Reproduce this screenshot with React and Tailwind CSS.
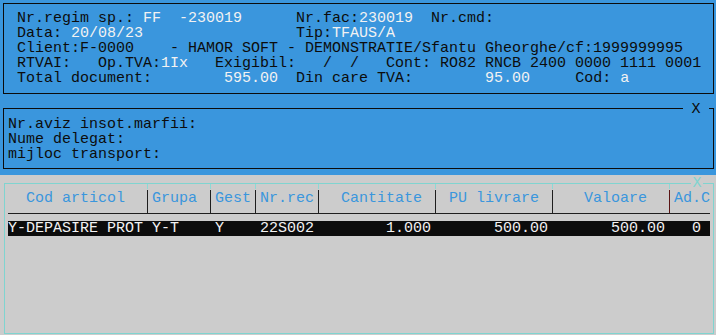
import React from "react";

const W = ({ children }) => <span className="text-[#f2f2f2]">{children}</span>;

const Sep = ({ red }) => (
  <div className="w-[9px] flex flex-col items-center">
    <div className="w-px h-[5px] bg-[#8fd8d4]" />
    <div className={"w-px flex-1 mt-[1px] " + (red ? "bg-[#5a1414]" : "bg-[#1e1e1e]")} />
  </div>
);

const Cell = ({ w, children }) => (
  <div className={"pt-[7px] text-[#3a96dd] whitespace-pre " + w}>{children}</div>
);

export default function App() {
  return (
    <div className="w-[716px] h-[335px] overflow-hidden bg-[#cccccc] font-['Liberation_Mono',monospace] text-[15px] leading-[15px]">
      <div className="bg-[#3a96dd] h-[175px] pt-[3px] pl-[3px]">
        <div className="border border-[#0c0c0c] w-[711px] h-[91px] pl-[13px] pt-[7px] whitespace-pre text-[#0c0c0c]">
          <div>Nr.regim sp.: <W>FF  -230019</W>      Nr.fac:<W>230019</W>  Nr.cmd:</div>
          <div>Data: <W>20/08/23</W>                 Tip:<W>TFAUS/A</W></div>
          <div>Client:F-0000    - HAMOR SOFT - DEMONSTRATIE/Sfantu Gheorghe/cf:1999999995</div>
          <div>RTVAI:   Op.TVA:<W>1Ix</W>   Exigibil:   /  /   Cont: RO82 RNCB 2400 0000 1111 0001</div>
          <div>Total document:        <W>595.00</W>  Din care TVA:        <W>95.00</W>     Cod: <W>a</W></div>
        </div>
        <div className="relative mt-[14px] border border-[#0c0c0c] w-[711px] h-[61px] pl-[4px] pt-[8px] whitespace-pre text-[#0c0c0c]">
          <div>Nr.aviz insot.marfii:</div>
          <div>Nume delegat:</div>
          <div>mijloc transport:</div>
          <span className="absolute top-[-7px] left-[679px] w-[26px] h-[15px] bg-[#3a96dd] text-center">X</span>
        </div>
      </div>
      <div className="pt-[8px] pl-[4px]">
        <div className="relative border border-[#7fd4d0] w-[710px] h-[151px] pl-[3px]">
          <span className="absolute top-[-8px] left-[686px] w-[12px] h-[15px] bg-[#cccccc] text-center text-[#7fd4d0]">X</span>
          <div className="w-[702px] h-[30px] flex border-b border-[#1e1e1e]">
            <Cell w="w-[135px]">  Cod articol</Cell>
            <Sep />
            <Cell w="w-[54px]">Grupa</Cell>
            <Sep />
            <Cell w="w-[36px]">Gest</Cell>
            <Sep />
            <Cell w="w-[54px]">Nr.rec</Cell>
            <Sep />
            <Cell w="w-[108px]">  Cantitate</Cell>
            <Sep />
            <Cell w="w-[108px]"> PU livrare</Cell>
            <Sep />
            <Cell w="w-[108px]">   Valoare</Cell>
            <Sep red />
            <Cell w="w-[36px]">Ad.C</Cell>
          </div>
          <div className="mt-[7px] w-[702px] h-[15px] leading-[16px] bg-[#0c0c0c] text-[#f2f2f2] whitespace-pre">
            {"Y-DEPASIRE PROT Y-T    Y    22S002        1.000       500.00       500.00   0 "}
          </div>
        </div>
      </div>
    </div>
  );
}
